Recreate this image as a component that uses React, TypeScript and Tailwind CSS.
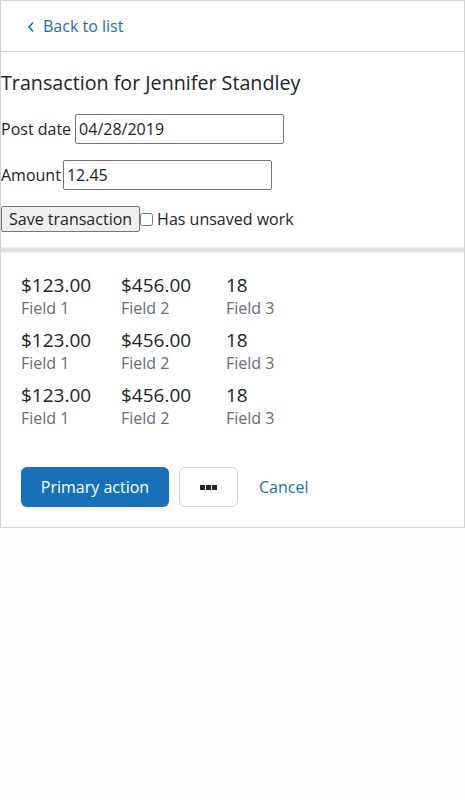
import React from "react";

export default function App() {
  const rows = [0, 1, 2];
  return (
    <div className="min-h-[800px] bg-[#fbfbfb]" style={{ fontFamily: '"Open Sans", "Noto Sans", sans-serif' }}>
      <div className="border border-[#d2d2d2] bg-white text-[#212327]">
        <div className="h-[51px] border-b border-[#d2d2d2] flex items-center pl-[26px]">
          <a className="flex items-center text-[16px] text-[#1870b8] gap-[8px] cursor-pointer">
            <svg width="8" height="12" viewBox="0 0 8 12" className="mt-[1px]">
              <path d="M6 1.5 L2 6 L6 10.5" fill="none" stroke="#1870b8" strokeWidth="1.6" />
            </svg>
            <span>Back to list</span>
          </a>
        </div>
        <div>
          <h1 className="text-[19.7px] leading-[28px] mt-[17px] pl-0">Transaction for Jennifer Standley</h1>
          <div className="mt-[17px] flex items-center text-[16px] gap-[4px]">
            <label>Post date</label>
            <input
              defaultValue="04/28/2019"
              className="w-[209px] h-[30px] border border-[#767676] rounded-[2px] px-[3px] text-[16px] outline-none"
            />
          </div>
          <div className="mt-[16px] flex items-center text-[16px] gap-[2px]">
            <label>Amount</label>
            <input
              defaultValue="12.45"
              className="w-[209px] h-[30px] border border-[#767676] rounded-[2px] px-[3px] text-[16px] outline-none"
            />
          </div>
          <div className="mt-[16px] flex items-center text-[16px]">
            <button className="h-[26px] px-[7px] bg-[#efefef] border border-[#767676] rounded-[2px] text-[16px] leading-none">
              Save transaction
            </button>
            <input type="checkbox" className="w-[13px] h-[13px] ml-0 mr-[4px]" />
            <span>Has unsaved work</span>
          </div>
          <div className="mt-[15px] h-[6px] bg-gradient-to-b from-[#f2f2f2] via-[#dcdcdc] to-[#f0f0f0]" />
        </div>
        <div className="px-[20px] pt-[20px] pb-[20px]">
          {rows.map((r) => (
            <div key={r} className="flex mb-[9px]">
              <div className="w-[100px]">
                <div className="text-[19px] leading-[24px]">$123.00</div>
                <div className="text-[16px] leading-[22px] text-[#686c73]">Field 1</div>
              </div>
              <div className="w-[105px]">
                <div className="text-[19px] leading-[24px]">$456.00</div>
                <div className="text-[16px] leading-[22px] text-[#686c73]">Field 2</div>
              </div>
              <div>
                <div className="text-[19px] leading-[24px]">18</div>
                <div className="text-[16px] leading-[22px] text-[#686c73]">Field 3</div>
              </div>
            </div>
          ))}
          <div className="flex items-center mt-[38px]">
            <button className="h-[40px] w-[148px] rounded-[6px] bg-[#1870b8] text-white text-[16px]">
              Primary action
            </button>
            <button className="h-[40px] w-[59px] ml-[10px] rounded-[6px] border border-[#cdcfd2] bg-white flex items-center justify-center gap-[1px]">
              <span className="w-[5px] h-[5px] bg-[#212327]" />
              <span className="w-[5px] h-[5px] bg-[#212327]" />
              <span className="w-[5px] h-[5px] bg-[#212327]" />
            </button>
            <button className="ml-[21px] text-[16px] text-[#1870b8]">Cancel</button>
          </div>
        </div>
      </div>
    </div>
  );
}
